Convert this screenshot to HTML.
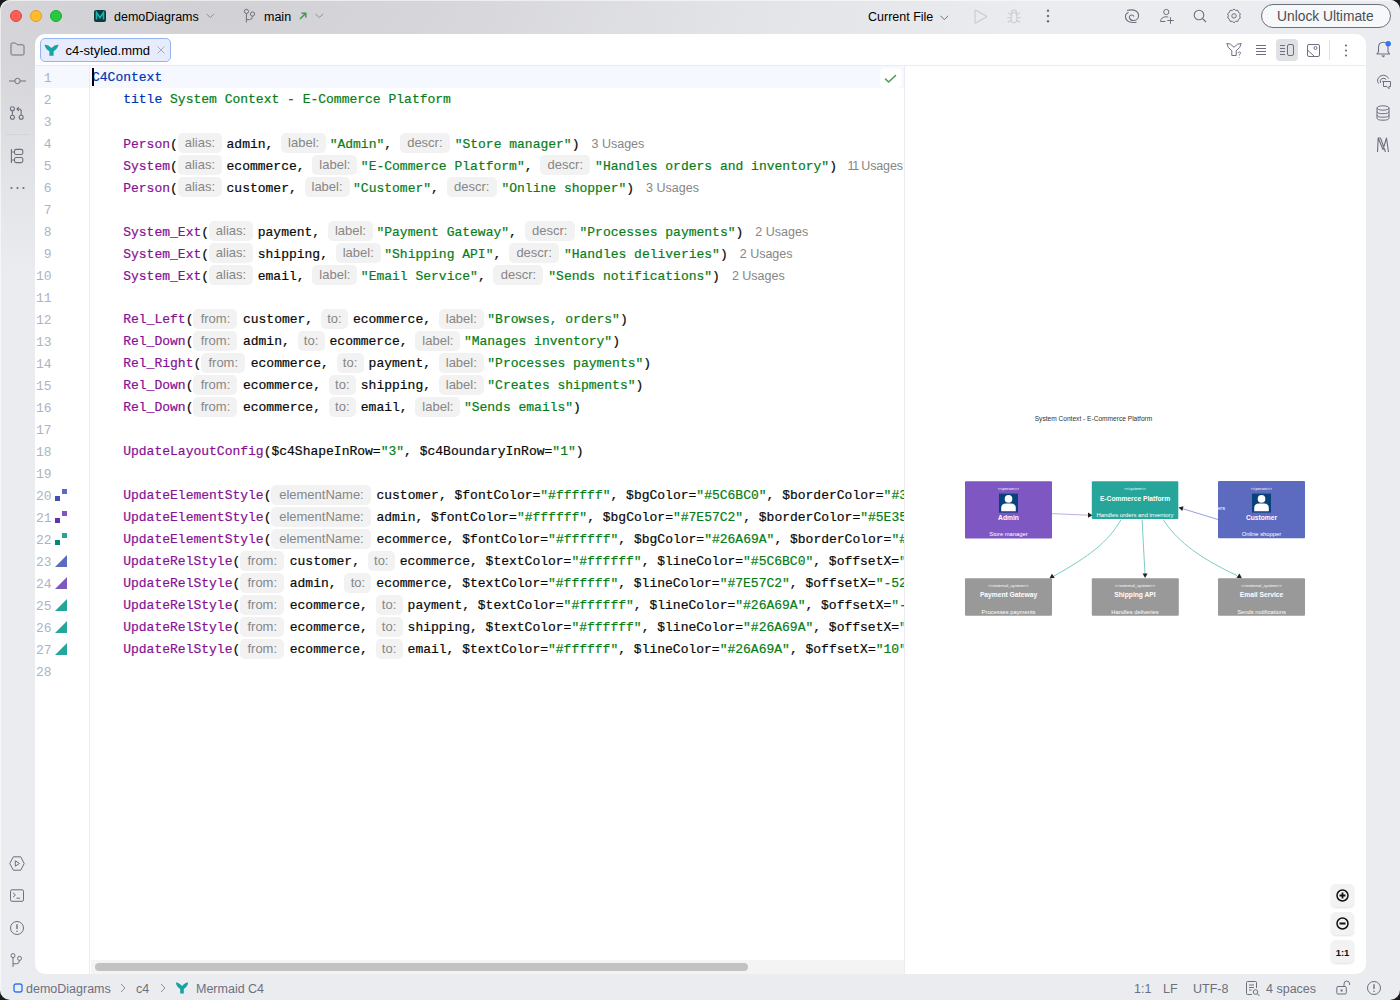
<!DOCTYPE html>
<html><head><meta charset="utf-8">
<style>
*{margin:0;padding:0;box-sizing:border-box}
html,body{width:1400px;height:1000px;overflow:hidden;background:#1b1b1d}
body{font-family:"Liberation Sans",sans-serif;position:relative}
.win{position:absolute;left:0;top:0;width:1400px;height:1000px;border-radius:10px;overflow:hidden;background:#EBECF0}
.tbgrad{position:absolute;left:0;top:0;width:1400px;height:300px;background:radial-gradient(ellipse 850px 280px at 180px 0px,#d1d1d5 0%,#d6d6da 30%,#e2e3e7 65%,#EBECF0 100%)}
.lgrad{position:absolute;left:0;top:0;width:1400px;height:1000px;border-radius:10px;box-shadow:inset 1px 1px 0 rgba(255,255,255,0.55)}
.abs{position:absolute}
svg.abs{overflow:visible}
.island{position:absolute;left:35px;top:34px;width:1331px;height:940px;background:#fff;border-radius:10px;overflow:hidden}
.tl{position:absolute;width:12px;height:12px;border-radius:50%;top:10px}
.tt{position:absolute;font-size:12.5px;color:#000;line-height:16px;white-space:nowrap}
/* editor (coords relative to island: subtract 35,34) */
.hdrsep{position:absolute;left:0;top:31px;width:1331px;height:1px;background:#EBECF0}
.curline{position:absolute;left:0;top:32px;width:869px;height:22px;background:#F5F8FE}
.gutsep{position:absolute;left:54px;top:32px;width:1px;height:908px;background:#EBECF0}
.split{position:absolute;left:869px;top:32px;width:1px;height:908px;background:#EBECF0}
.lnums{position:absolute;left:0;top:34px;width:16.5px;font-family:"Liberation Mono",monospace;font-size:13px;line-height:22px;color:#AEB3C2;text-align:right}
.code{position:absolute;left:57px;top:33px;width:812px;height:908px;overflow:hidden;font-family:"Liberation Mono",monospace;font-size:13px;line-height:22px;color:#080808;white-space:pre;-webkit-text-stroke:0.2px}
.ln{height:22px;position:relative}
.code b{font-weight:normal}
.k{color:#0033B3}.f{color:#871094}.s{color:#067D17}
.h{-webkit-text-stroke:0;display:inline-block;font-style:normal;font-family:"Liberation Sans",sans-serif;font-size:13px;color:#868686;background:#F2F2F2;border-radius:5px;height:20px;line-height:20px;vertical-align:top;margin-top:0px;text-align:center;white-space:nowrap}
.us{-webkit-text-stroke:0;text-decoration:none;font-family:"Liberation Sans",sans-serif;font-size:12.5px;color:#868686;margin-left:12px}
.tab{position:absolute;left:5px;top:4px;width:131px;height:24px;border-radius:5px;background:#E6ECFC;border:1px solid #92B3F4}
.sb{position:absolute;font-size:12.5px;color:#6C707E;top:981px;line-height:16px;white-space:nowrap}
.zbtn{position:absolute;left:1296px;width:23px;height:23px;border-radius:5px;background:#F2F2F2;box-shadow:0 1px 2px rgba(0,0,0,0.12)}
.dg{position:absolute;color:#fff;text-align:center;white-space:nowrap;font-family:"Liberation Sans",sans-serif}
</style></head><body>
<div class="win">
  <div class="tbgrad"></div>
  <div class="lgrad"></div>
  <div class="tl" style="left:10px;background:#ff5f57;border:0.5px solid #e2463f"></div>
  <div class="tl" style="left:30px;background:#febc2e;border:0.5px solid #e1a116"></div>
  <div class="tl" style="left:50px;background:#28c840;border:0.5px solid #14ae2b"></div>

  <!-- title bar -->
  <svg class="abs" style="left:94px;top:10px" width="12" height="12" viewBox="0 0 12 12"><rect x="0" y="0" width="12" height="12" rx="2" fill="#0c3a3e"/><path d="M2.5 9.5V2.5L6 7.5 9.5 2.5V9.5" fill="none" stroke="#1bb3b5" stroke-width="1.6"/></svg>
  <div class="tt" style="left:114px;top:9px">demoDiagrams</div>
  <svg class="abs" style="left:206px;top:13px" width="9" height="6" viewBox="0 0 9 6"><path d="M0.5 0.8L4.3 4.6 8.1 0.8" fill="none" stroke="#8C8F99" stroke-width="1"/></svg>
  <svg class="abs" style="left:243px;top:8px" width="14" height="16" viewBox="0 0 14 16"><circle cx="3.4" cy="3.4" r="2.1" fill="none" stroke="#6C707E" stroke-width="1"/><circle cx="9.5" cy="6" r="2.1" fill="none" stroke="#6C707E" stroke-width="1"/><path d="M3.4 5.5V14.5M3.4 11.6H6.5Q9.5 11.6 9.5 8.1" fill="none" stroke="#6C707E" stroke-width="1"/></svg>
  <div class="tt" style="left:264px;top:9px">main</div>
  <svg class="abs" style="left:299px;top:12px" width="8" height="8" viewBox="0 0 8 8"><path d="M1 7L6.8 1.2M2.5 1.2H6.8V5.5" fill="none" stroke="#3E9A4F" stroke-width="1.5"/></svg>
  <svg class="abs" style="left:315px;top:13px" width="9" height="6" viewBox="0 0 9 6"><path d="M0.5 0.8L4.3 4.6 8.1 0.8" fill="none" stroke="#8C8F99" stroke-width="1"/></svg>

  <div class="tt" style="left:868px;top:9px">Current File</div>
  <svg class="abs" style="left:940px;top:15px" width="9" height="6" viewBox="0 0 9 6"><path d="M0.5 0.8L4.3 4.6 8.1 0.8" fill="none" stroke="#6C707E" stroke-width="1"/></svg>
  <svg class="abs" style="left:973px;top:9px" width="15" height="15" viewBox="0 0 15 15"><path d="M2 1.8Q2 0.8 3 1.3L13.2 6.9Q14 7.5 13.2 8.1L3 13.7Q2 14.2 2 13.2Z" fill="none" stroke="#C9CBD1" stroke-width="1.1"/></svg>
  <svg class="abs" style="left:1006px;top:9px" width="16" height="15" viewBox="0 0 16 15"><path d="M5.3 4.2Q5.3 1 8 1 10.7 1 10.7 4.2M8 3.5Q11 3.5 11 9.2 11 13.8 8 13.8 5 13.8 5 9.2 5 3.5 8 3.5ZM5 5.5L1.8 3.6M11 5.5L14.2 3.6M5 8.8H1.2M11 8.8H14.8M5 11.5L1.8 13.2M11 11.5L14.2 13.2" fill="none" stroke="#C9CBD1" stroke-width="1.1"/></svg>
  <svg class="abs" style="left:1046px;top:9px" width="4" height="15" viewBox="0 0 4 15"><circle cx="2" cy="1.7" r="1.2" fill="#6C707E"/><circle cx="2" cy="7" r="1.2" fill="#6C707E"/><circle cx="2" cy="12.3" r="1.2" fill="#6C707E"/></svg>

  <svg class="abs" style="left:1124px;top:9px" width="16" height="15" viewBox="0 0 16 15"><path d="M3 1.6Q8 0 12 2 15 4 14.5 7.5 14 11 10 11.5 6.5 11.8 5.5 9 4.8 6.5 7.5 6 9.5 5.8 9.8 7.6M12.6 13.2Q8 14.2 4.5 12.5 1.2 10.5 1.5 7 1.8 4.3 4.5 3.5" fill="none" stroke="#6C707E" stroke-width="1.1"/></svg>
  <svg class="abs" style="left:1159px;top:8px" width="17" height="17" viewBox="0 0 17 17"><circle cx="7.3" cy="4" r="2.6" fill="none" stroke="#6C707E" stroke-width="1"/><path d="M1.5 13.5Q2 9 7 8.8 8.5 8.8 9.3 9.2M1.5 13.5H6.5M11.5 9.3V15.8M8.3 12.5H14.8" fill="none" stroke="#6C707E" stroke-width="1"/></svg>
  <svg class="abs" style="left:1193px;top:9px" width="14" height="14" viewBox="0 0 14 14"><circle cx="6" cy="6" r="4.8" fill="none" stroke="#6C707E" stroke-width="1.1"/><path d="M9.5 9.5L13 13" stroke="#6C707E" stroke-width="1.1"/></svg>
  <svg class="abs" style="left:1226px;top:8px" width="16" height="16" viewBox="0 0 16 16"><path d="M8 1L9.6 2.4 11.8 2.3 12.5 4.4 14.3 5.7 13.7 7.8 14.3 10 12.5 11.3 11.8 13.4 9.6 13.3 8 14.8 6.4 13.3 4.2 13.4 3.5 11.3 1.7 10 2.3 7.8 1.7 5.7 3.5 4.4 4.2 2.3 6.4 2.4Z" fill="none" stroke="#6C707E" stroke-width="1" stroke-linejoin="round"/><circle cx="8" cy="7.9" r="2.2" fill="none" stroke="#6C707E" stroke-width="1"/></svg>
  <div class="abs" style="left:1261px;top:4px;width:130px;height:24px;border-radius:12px;border:1.8px solid #6C707E;background:#F7F8FA"></div>
  <div class="tt" style="left:1277px;top:8px;font-size:13.8px;color:#4a4d55;line-height:18px">Unlock Ultimate</div>

  <!-- left strip -->
  <svg class="abs" style="left:10px;top:42px" width="15" height="14" viewBox="0 0 15 14"><path d="M1 2.2Q1 1 2.2 1H5.5L7.3 2.8H12.8Q14 2.8 14 4V11.8Q14 13 12.8 13H2.2Q1 13 1 11.8Z" fill="none" stroke="#6C707E" stroke-width="1"/></svg>
  <svg class="abs" style="left:9px;top:75px" width="17" height="12" viewBox="0 0 17 12"><circle cx="8.5" cy="6" r="2.7" fill="none" stroke="#6C707E" stroke-width="1"/><path d="M0 6H5.8M11.2 6H17" stroke="#6C707E" stroke-width="1"/></svg>
  <svg class="abs" style="left:8px;top:105px" width="16" height="16" viewBox="0 0 16 16"><circle cx="4.4" cy="3.8" r="2" fill="none" stroke="#6C707E" stroke-width="1.1"/><circle cx="4.4" cy="12.2" r="2" fill="none" stroke="#6C707E" stroke-width="1.1"/><circle cx="13.2" cy="12.2" r="2" fill="none" stroke="#6C707E" stroke-width="1.1"/><path d="M4.4 5.8V10.2M13.2 10.2V6.2Q13.2 4 11 4H9.3M10.8 2.2L9 4 10.8 5.8" fill="none" stroke="#6C707E" stroke-width="1.1"/></svg>
  <div class="abs" style="left:5px;top:134px;width:24px;height:1px;background:#D3D5DB"></div>
  <svg class="abs" style="left:10px;top:148px" width="14" height="16" viewBox="0 0 14 16"><path d="M1.4 1V15M1.4 4H4.5M1.4 12H4.5" fill="none" stroke="#6C707E" stroke-width="1.1"/><rect x="4.5" y="1.4" width="8.3" height="5.1" rx="1.6" fill="none" stroke="#6C707E" stroke-width="1.1"/><rect x="4.5" y="9.5" width="8.3" height="5.1" rx="1.6" fill="none" stroke="#6C707E" stroke-width="1.1"/></svg>
  <svg class="abs" style="left:10px;top:186px" width="15" height="4" viewBox="0 0 15 4"><circle cx="1.5" cy="2" r="1.1" fill="#6C707E"/><circle cx="7.5" cy="2" r="1.1" fill="#6C707E"/><circle cx="13.5" cy="2" r="1.1" fill="#6C707E"/></svg>

  <svg class="abs" style="left:9px;top:856px" width="16" height="15" viewBox="0 0 16 15"><path d="M4.3 0.8H11.7L15.2 7.5 11.7 14.2H4.3L0.8 7.5Z" fill="none" stroke="#6C707E" stroke-width="1"/><path d="M6.3 4.8V10.2L10.5 7.5Z" fill="none" stroke="#6C707E" stroke-width="1"/></svg>
  <svg class="abs" style="left:10px;top:889px" width="14" height="13" viewBox="0 0 14 13"><rect x="0.5" y="0.8" width="13" height="11.5" rx="1.5" fill="none" stroke="#6C707E" stroke-width="1"/><path d="M3 3.8L5.4 6 3 8.2M6.5 9.2H10" fill="none" stroke="#6C707E" stroke-width="1"/></svg>
  <svg class="abs" style="left:10px;top:921px" width="14" height="14" viewBox="0 0 14 14"><circle cx="7" cy="7" r="6.5" fill="none" stroke="#6C707E" stroke-width="1"/><path d="M7 3.3V8" stroke="#6C707E" stroke-width="1.4"/><circle cx="7" cy="10.2" r="0.8" fill="#6C707E"/></svg>
  <svg class="abs" style="left:10px;top:953px" width="13" height="15" viewBox="0 0 13 15"><circle cx="3" cy="2.6" r="2" fill="none" stroke="#6C707E" stroke-width="1"/><circle cx="9.5" cy="5.4" r="2" fill="none" stroke="#6C707E" stroke-width="1"/><path d="M3 4.6V14M3 10.8H6.5Q9.5 10.8 9.5 7.4" fill="none" stroke="#6C707E" stroke-width="1"/></svg>

  <!-- right strip -->
  <svg class="abs" style="left:1376px;top:41px" width="16" height="17" viewBox="0 0 16 17"><path d="M1 13H13.5L12 10.8V6.8Q12 1.2 7.2 1.2 2.5 1.2 2.5 6.8V10.8Z" fill="none" stroke="#6C707E" stroke-width="1.1" stroke-linejoin="round"/><path d="M5.8 14.8H8.8L7.3 16Z" fill="#6C707E" stroke="#6C707E" stroke-width="0.6"/><circle cx="12.2" cy="2.8" r="2.7" fill="#3574F0"/></svg>
  <svg class="abs" style="left:1376px;top:74px" width="16" height="16" viewBox="0 0 16 16"><path d="M2.5 9.5Q1 7.5 1.8 5 3.3 1.2 7.5 1.2 11 1.3 12.8 4.5M4.5 9Q3.5 6.5 5.5 4.8 8 3.2 10.3 5.5M7.8 7.5Q6.5 6.8 6 8" fill="none" stroke="#6C707E" stroke-width="1"/><path d="M7.5 7.5H14.5V12.5H13V14.8L11 12.5H7.5Z" fill="#EBECF0" stroke="#6C707E" stroke-width="1" stroke-linejoin="round"/></svg>
  <svg class="abs" style="left:1376px;top:105px" width="14" height="16" viewBox="0 0 14 16"><ellipse cx="7" cy="3" rx="6" ry="2.2" fill="none" stroke="#6C707E" stroke-width="1"/><path d="M1 3V13Q1 15.2 7 15.2 13 15.2 13 13V3M1 6.5Q1 8.7 7 8.7 13 8.7 13 6.5M1 10Q1 12.2 7 12.2 13 12.2 13 10" fill="none" stroke="#6C707E" stroke-width="1"/></svg>
  <svg class="abs" style="left:1376px;top:137px" width="14" height="16" viewBox="0 0 14 16"><path d="M1.5 15L2.2 1 7 12.5 10.5 1 12.5 15M4.5 1L9.5 15M2.2 1H4.5" fill="none" stroke="#6C707E" stroke-width="1.1" stroke-linejoin="round"/></svg>

  <!-- status bar -->
  <svg class="abs" style="left:13px;top:983px" width="10" height="10" viewBox="0 0 10 10"><rect x="1" y="1" width="8" height="8" rx="2" fill="#E6EEFD" stroke="#3574F0" stroke-width="1.4"/></svg>
  <div class="sb" style="left:26px">demoDiagrams</div>
  <svg class="abs" style="left:120px;top:983px" width="6" height="10" viewBox="0 0 6 10"><path d="M1 1L5 5 1 9" fill="none" stroke="#8C8F99" stroke-width="1"/></svg>
  <div class="sb" style="left:136px">c4</div>
  <svg class="abs" style="left:160px;top:983px" width="6" height="10" viewBox="0 0 6 10"><path d="M1 1L5 5 1 9" fill="none" stroke="#8C8F99" stroke-width="1"/></svg>
  <svg class="abs" style="left:175px;top:981px" width="14" height="13" viewBox="0 0 14 13"><path d="M0.8 1.5Q3.5 1 7 5 10.5 1 13.2 1.5 12.5 5.5 8.8 8V12.5H5.2V8Q1.5 5.5 0.8 1.5Z" fill="#17A2A4"/></svg>
  <div class="sb" style="left:196px">Mermaid C4</div>
  <div class="sb" style="left:1134px">1:1</div>
  <div class="sb" style="left:1163px">LF</div>
  <div class="sb" style="left:1193px">UTF-8</div>
  <svg class="abs" style="left:1245px;top:981px" width="16" height="16" viewBox="0 0 16 16"><path d="M7 13.5H2.5Q1.5 13.5 1.5 12.5V1.5Q1.5 0.5 2.5 0.5H10.5Q11.5 0.5 11.5 1.5V7" fill="none" stroke="#6C707E" stroke-width="1"/><path d="M4 4H9M4 6.5H9M4 9H6.5" stroke="#6C707E" stroke-width="1"/><circle cx="10.5" cy="11" r="2.3" fill="none" stroke="#6C707E" stroke-width="1"/><path d="M12.2 12.7L14.5 15" stroke="#6C707E" stroke-width="1"/></svg>
  <div class="sb" style="left:1266px">4 spaces</div>
  <svg class="abs" style="left:1336px;top:980px" width="15" height="15" viewBox="0 0 15 15"><rect x="0.8" y="6.5" width="9.5" height="7.5" rx="1.2" fill="none" stroke="#6C707E" stroke-width="1"/><path d="M8 6.5V4Q8 1 10.8 1 13.6 1 13.6 4V5" fill="none" stroke="#6C707E" stroke-width="1"/><rect x="4.6" y="9.5" width="2" height="2" fill="#6C707E"/></svg>
  <svg class="abs" style="left:1367px;top:981px" width="14" height="14" viewBox="0 0 14 14"><circle cx="7" cy="7" r="6.5" fill="none" stroke="#6C707E" stroke-width="1"/><path d="M7 3.3V8" stroke="#6C707E" stroke-width="1.4"/><circle cx="7" cy="10.2" r="0.8" fill="#6C707E"/></svg>

  <div class="island">
    <div class="hdrsep"></div>
    <div class="tab"></div>
    <svg class="abs" style="left:9px;top:10px" width="15" height="12" viewBox="0 0 15 12"><path d="M0.5 0.8Q4 0.3 7.5 4 11 0.3 14.5 0.8 13.6 5 9.6 7.3V11.8H5.4V7.3Q1.4 5 0.5 0.8Z" fill="#17A2A4"/></svg>
    <div class="tt" style="left:30.5px;top:9px;font-size:13px;color:#000">c4-styled.mmd</div>
    <svg class="abs" style="left:122px;top:12px" width="8" height="8" viewBox="0 0 8 8"><path d="M0.5 0.5L7.5 7.5M7.5 0.5L0.5 7.5" stroke="#A8ADBD" stroke-width="1"/></svg>

    <!-- editor toolbar right -->
    <svg class="abs" style="left:1191px;top:8px" width="18" height="16" viewBox="0 0 18 16"><path d="M0.8 1.5Q4.5 0.8 8 5.3 11.5 0.8 15.2 1.5 14.5 6.2 10.2 8.6V13.5H5.8V8.6Q1.5 6.2 0.8 1.5Z" fill="none" stroke="#6C707E" stroke-width="1"/><path d="M12 11.2Q12 10 13.3 10 14.6 10 14.6 11.2 14.6 12 13.3 12.6V13.5M13.3 15V15.6" fill="none" stroke="#6C707E" stroke-width="0.9"/></svg>
    <svg class="abs" style="left:1221px;top:10px" width="11" height="11" viewBox="0 0 11 11"><path d="M0 1.5H10M0 4.5H10M0 7.5H10M0 10.5H10" stroke="#6C707E" stroke-width="1"/></svg>
    <div class="abs" style="left:1241px;top:5px;width:22px;height:22px;border-radius:4px;background:#DFE1E5"></div>
    <svg class="abs" style="left:1245px;top:10px" width="14" height="13" viewBox="0 0 14 13"><path d="M0 1.5H5M0 4.5H5M0 7.5H5M0 10.5H5" stroke="#6C707E" stroke-width="1"/><rect x="7.5" y="0.5" width="6" height="11" rx="1.5" fill="none" stroke="#6C707E" stroke-width="1"/></svg>
    <svg class="abs" style="left:1272px;top:10px" width="13" height="13" viewBox="0 0 13 13"><rect x="0.5" y="0.5" width="12" height="12" rx="1.5" fill="none" stroke="#6C707E" stroke-width="1"/><circle cx="8.5" cy="4" r="1.5" fill="none" stroke="#6C707E" stroke-width="1"/><path d="M0.5 6L7.5 12.5" stroke="#6C707E" stroke-width="1"/></svg>
    <div class="abs" style="left:1294px;top:6px;width:1px;height:20px;background:#DFE1E5"></div>
    <svg class="abs" style="left:1309px;top:10px" width="4" height="13" viewBox="0 0 4 13"><circle cx="2" cy="1.5" r="1.1" fill="#6C707E"/><circle cx="2" cy="6.5" r="1.1" fill="#6C707E"/><circle cx="2" cy="11.5" r="1.1" fill="#6C707E"/></svg>

    <div class="curline"></div>
    <div class="gutsep"></div>
    <div class="split"></div>
    <div class="lnums">1<br>2<br>3<br>4<br>5<br>6<br>7<br>8<br>9<br>10<br>11<br>12<br>13<br>14<br>15<br>16<br>17<br>18<br>19<br>20<br>21<br>22<br>23<br>24<br>25<br>26<br>27<br>28</div>
    <div class="code"><div class="ln"><b class="k">C4Context</b></div><div class="ln">    <b class="k">title</b><b class="s"> System Context - E-Commerce Platform</b></div><div class="ln"></div><div class="ln">    <b class="f">Person</b>(<i class="h" style="width:44px;margin-right:4.7px">alias:</i>admin, <i class="h" style="width:45px;margin-right:3.5px">label:</i><b class="s">&quot;Admin&quot;</b>, <i class="h" style="width:50px;margin-right:4.8px">descr:</i><b class="s">&quot;Store manager&quot;</b>)<u class="us">3 Usages</u></div><div class="ln">    <b class="f">System</b>(<i class="h" style="width:44px;margin-right:4.7px">alias:</i>ecommerce, <i class="h" style="width:45px;margin-right:3.5px">label:</i><b class="s">&quot;E-Commerce Platform&quot;</b>, <i class="h" style="width:50px;margin-right:4.8px">descr:</i><b class="s">&quot;Handles orders and inventory&quot;</b>)<u class="us"><span style="letter-spacing:-1.3px;margin-left:-1.5px">11</span> <span style="letter-spacing:-0.15px">Usages</span></u></div><div class="ln">    <b class="f">Person</b>(<i class="h" style="width:44px;margin-right:4.7px">alias:</i>customer, <i class="h" style="width:45px;margin-right:3.5px">label:</i><b class="s">&quot;Customer&quot;</b>, <i class="h" style="width:50px;margin-right:4.8px">descr:</i><b class="s">&quot;Online shopper&quot;</b>)<u class="us">3 Usages</u></div><div class="ln"></div><div class="ln">    <b class="f">System_Ext</b>(<i class="h" style="width:44px;margin-right:4.7px">alias:</i>payment, <i class="h" style="width:45px;margin-right:3.5px">label:</i><b class="s">&quot;Payment Gateway&quot;</b>, <i class="h" style="width:50px;margin-right:4.8px">descr:</i><b class="s">&quot;Processes payments&quot;</b>)<u class="us">2 Usages</u></div><div class="ln">    <b class="f">System_Ext</b>(<i class="h" style="width:44px;margin-right:4.7px">alias:</i>shipping, <i class="h" style="width:45px;margin-right:3.5px">label:</i><b class="s">&quot;Shipping API&quot;</b>, <i class="h" style="width:50px;margin-right:4.8px">descr:</i><b class="s">&quot;Handles deliveries&quot;</b>)<u class="us">2 Usages</u></div><div class="ln">    <b class="f">System_Ext</b>(<i class="h" style="width:44px;margin-right:4.7px">alias:</i>email, <i class="h" style="width:45px;margin-right:3.5px">label:</i><b class="s">&quot;Email Service&quot;</b>, <i class="h" style="width:50px;margin-right:4.8px">descr:</i><b class="s">&quot;Sends notifications&quot;</b>)<u class="us">2 Usages</u></div><div class="ln"></div><div class="ln">    <b class="f">Rel_Left</b>(<i class="h" style="width:44px;margin-right:5.5px">from:</i>customer, <i class="h" style="width:27px;margin-right:5px">to:</i>ecommerce, <i class="h" style="width:45px;margin-right:3.5px">label:</i><b class="s">&quot;Browses, orders&quot;</b>)</div><div class="ln">    <b class="f">Rel_Down</b>(<i class="h" style="width:44px;margin-right:5.5px">from:</i>admin, <i class="h" style="width:27px;margin-right:5px">to:</i>ecommerce, <i class="h" style="width:45px;margin-right:3.5px">label:</i><b class="s">&quot;Manages inventory&quot;</b>)</div><div class="ln">    <b class="f">Rel_Right</b>(<i class="h" style="width:44px;margin-right:5.5px">from:</i>ecommerce, <i class="h" style="width:27px;margin-right:5px">to:</i>payment, <i class="h" style="width:45px;margin-right:3.5px">label:</i><b class="s">&quot;Processes payments&quot;</b>)</div><div class="ln">    <b class="f">Rel_Down</b>(<i class="h" style="width:44px;margin-right:5.5px">from:</i>ecommerce, <i class="h" style="width:27px;margin-right:5px">to:</i>shipping, <i class="h" style="width:45px;margin-right:3.5px">label:</i><b class="s">&quot;Creates shipments&quot;</b>)</div><div class="ln">    <b class="f">Rel_Down</b>(<i class="h" style="width:44px;margin-right:5.5px">from:</i>ecommerce, <i class="h" style="width:27px;margin-right:5px">to:</i>email, <i class="h" style="width:45px;margin-right:3.5px">label:</i><b class="s">&quot;Sends emails&quot;</b>)</div><div class="ln"></div><div class="ln">    <b class="f">UpdateLayoutConfig</b>($c4ShapeInRow=<b class="s">&quot;3&quot;</b>, $c4BoundaryInRow=<b class="s">&quot;1&quot;</b>)</div><div class="ln"></div><div class="ln">    <b class="f">UpdateElementStyle</b>(<i class="h" style="width:100px;margin-right:5px">elementName:</i>customer, $fontColor=<b class="s">&quot;#ffffff&quot;</b>, $bgColor=<b class="s">&quot;#5C6BC0&quot;</b>, $borderColor=<b class="s">&quot;#3F51B5&quot;</b>)</div><div class="ln">    <b class="f">UpdateElementStyle</b>(<i class="h" style="width:100px;margin-right:5px">elementName:</i>admin, $fontColor=<b class="s">&quot;#ffffff&quot;</b>, $bgColor=<b class="s">&quot;#7E57C2&quot;</b>, $borderColor=<b class="s">&quot;#5E35B1&quot;</b>)</div><div class="ln">    <b class="f">UpdateElementStyle</b>(<i class="h" style="width:100px;margin-right:5px">elementName:</i>ecommerce, $fontColor=<b class="s">&quot;#ffffff&quot;</b>, $bgColor=<b class="s">&quot;#26A69A&quot;</b>, $borderColor=<b class="s">&quot;#00897B&quot;</b>)</div><div class="ln">    <b class="f">UpdateRelStyle</b>(<i class="h" style="width:44px;margin-right:5.5px">from:</i>customer, <i class="h" style="width:27px;margin-right:5px">to:</i>ecommerce, $textColor=<b class="s">&quot;#ffffff&quot;</b>, $lineColor=<b class="s">&quot;#5C6BC0&quot;</b>, $offsetX=<b class="s">&quot;-40&quot;</b>)</div><div class="ln">    <b class="f">UpdateRelStyle</b>(<i class="h" style="width:44px;margin-right:5.5px">from:</i>admin, <i class="h" style="width:27px;margin-right:5px">to:</i>ecommerce, $textColor=<b class="s">&quot;#ffffff&quot;</b>, $lineColor=<b class="s">&quot;#7E57C2&quot;</b>, $offsetX=<b class="s">&quot;-52&quot;</b>)</div><div class="ln">    <b class="f">UpdateRelStyle</b>(<i class="h" style="width:44px;margin-right:5.5px">from:</i>ecommerce, <i class="h" style="width:27px;margin-right:5px">to:</i>payment, $textColor=<b class="s">&quot;#ffffff&quot;</b>, $lineColor=<b class="s">&quot;#26A69A&quot;</b>, $offsetX=<b class="s">&quot;-60&quot;</b>)</div><div class="ln">    <b class="f">UpdateRelStyle</b>(<i class="h" style="width:44px;margin-right:5.5px">from:</i>ecommerce, <i class="h" style="width:27px;margin-right:5px">to:</i>shipping, $textColor=<b class="s">&quot;#ffffff&quot;</b>, $lineColor=<b class="s">&quot;#26A69A&quot;</b>, $offsetX=<b class="s">&quot;10&quot;</b>)</div><div class="ln">    <b class="f">UpdateRelStyle</b>(<i class="h" style="width:44px;margin-right:5.5px">from:</i>ecommerce, <i class="h" style="width:27px;margin-right:5px">to:</i>email, $textColor=<b class="s">&quot;#ffffff&quot;</b>, $lineColor=<b class="s">&quot;#26A69A&quot;</b>, $offsetX=<b class="s">&quot;10&quot;</b>)</div><div class="ln"></div></div>
    <div class="abs" style="left:57px;top:34px;width:2px;height:18px;background:#000"></div>
    <!-- check mark -->
    <div class="abs" style="left:845px;top:34px;width:22px;height:20px;border-radius:5px;background:#fff"></div>
    <svg class="abs" style="left:849px;top:40px" width="13" height="10" viewBox="0 0 13 10"><path d="M1.5 5L4.6 8 11.5 1.5" fill="none" stroke="#4A9C5D" stroke-width="1.6" stroke-linecap="round" stroke-linejoin="round"/></svg>
    <!-- gutter color icons -->
    <div class="abs" style="left:20px;top:462px;width:5px;height:5px;background:#3F51B5"></div>
    <div class="abs" style="left:27px;top:455px;width:5px;height:5px;background:#5C6BC0"></div>
    <div class="abs" style="left:20px;top:484px;width:5px;height:5px;background:#5E35B1"></div>
    <div class="abs" style="left:27px;top:477px;width:5px;height:5px;background:#7E57C2"></div>
    <div class="abs" style="left:20px;top:506px;width:5px;height:5px;background:#00897B"></div>
    <div class="abs" style="left:27px;top:499px;width:5px;height:5px;background:#26A69A"></div>
    <svg class="abs" style="left:20px;top:521px" width="12" height="12" viewBox="0 0 12 12"><path d="M0 12L12 0V12Z" fill="#5C6BC0"/></svg>
    <svg class="abs" style="left:20px;top:543px" width="12" height="12" viewBox="0 0 12 12"><path d="M0 12L12 0V12Z" fill="#7E57C2"/></svg>
    <svg class="abs" style="left:20px;top:565px" width="12" height="12" viewBox="0 0 12 12"><path d="M0 12L12 0V12Z" fill="#26A69A"/></svg>
    <svg class="abs" style="left:20px;top:587px" width="12" height="12" viewBox="0 0 12 12"><path d="M0 12L12 0V12Z" fill="#26A69A"/></svg>
    <svg class="abs" style="left:20px;top:609px" width="12" height="12" viewBox="0 0 12 12"><path d="M0 12L12 0V12Z" fill="#26A69A"/></svg>

    <!-- horizontal scrollbar -->
    <div class="abs" style="left:56px;top:926px;width:813px;height:14px;background:#F4F4F4"></div>
    <div class="abs" style="left:60px;top:929px;width:653px;height:8px;border-radius:4px;background:#C2C2C2"></div>

    <!-- preview zoom buttons -->
    <div class="zbtn" style="top:850px"></div>
    <div class="zbtn" style="top:878px"></div>
    <div class="zbtn" style="top:906px"></div>
    <svg class="abs" style="left:1301px;top:855px" width="13" height="13" viewBox="0 0 13 13"><circle cx="6.5" cy="6.5" r="5.5" fill="none" stroke="#111" stroke-width="1.5"/><path d="M6.5 3.5V9.5M3.5 6.5H9.5" stroke="#111" stroke-width="1.8"/></svg>
    <svg class="abs" style="left:1301px;top:883px" width="13" height="13" viewBox="0 0 13 13"><circle cx="6.5" cy="6.5" r="5.5" fill="none" stroke="#111" stroke-width="1.5"/><path d="M3.5 6.5H9.5" stroke="#111" stroke-width="1.8"/></svg>
    <div class="abs" style="left:1296px;top:913px;width:23px;text-align:center;font-size:9.5px;font-weight:bold;color:#111;line-height:12px">1:1</div>

  </div>
  <svg class="abs" style="left:0;top:0" width="1400" height="1000" viewBox="0 0 1400 1000" font-family="Liberation Sans, sans-serif"><text x="1093.5" y="418" font-size="6.6" fill="#333" text-anchor="middle" dominant-baseline="central">System Context - E-Commerce Platform</text><path d="M1052 513.6L1088 515.2" stroke="#B9A3E0" stroke-width="0.9" fill="none"/><path d="M1088 512.6L1092.5 515.3 1088 517.8Z" fill="#222"/><path d="M1218 519.5L1183 508.8" stroke="#8A95D6" stroke-width="0.9" fill="none"/><path d="M1178.5 507.5L1183.5 506.3 1182.3 511Z" fill="#222"/><path d="M1121 519.7C1108 542 1090 556 1053 576.5" stroke="#6CC5BD" stroke-width="0.9" fill="none"/><path d="M1049.5 578.5L1051.8 573.8 1054.8 577.8Z" fill="#222"/><path d="M1142.2 519.7C1143 540 1144 555 1145 574" stroke="#6CC5BD" stroke-width="0.9" fill="none"/><path d="M1142.6 573.5H1147.6L1145.1 578Z" fill="#222"/><path d="M1163.4 519.7C1175 538 1195 556 1237 575.5" stroke="#6CC5BD" stroke-width="0.9" fill="none"/><path d="M1236.5 577.8L1239.5 573.5 1242 578.5Z" fill="#222"/><rect x="965" y="481.2" width="87" height="57.3" rx="1" fill="#7E57C2"/><rect x="1091.8" y="481.3" width="86.5" height="37.7" rx="1" fill="#26A69A"/><rect x="1218" y="481.1" width="87" height="57.2" rx="1" fill="#5C6BC0"/><rect x="965" y="578.3" width="87" height="37.5" rx="1" fill="#999999"/><rect x="1091.8" y="578.3" width="87" height="37.5" rx="1" fill="#999999"/><rect x="1218" y="578.3" width="87" height="37.5" rx="1" fill="#999999"/><text x="1008.5" y="488" font-size="3.9" fill="#fff" text-anchor="middle" dominant-baseline="central">&lt;&lt;person&gt;&gt;</text><rect x="999.0" y="493.6" width="19" height="19" fill="#08427B"/><circle cx="1008.5" cy="498.90000000000003" r="3.8" fill="#fff"/><path d="M1001.2 511.20000000000005V508.1Q1001.2 503.6 1006.0 503.6H1011.0Q1015.8 503.6 1015.8 508.1V511.20000000000005Z" fill="#fff"/><text x="1008.5" y="517" font-size="6.7" fill="#fff" text-anchor="middle" dominant-baseline="central" font-weight="bold">Admin</text><text x="1008.5" y="534" font-size="5.8" fill="#fff" text-anchor="middle" dominant-baseline="central">Store manager</text><text x="1261.5" y="488" font-size="3.9" fill="#fff" text-anchor="middle" dominant-baseline="central">&lt;&lt;person&gt;&gt;</text><rect x="1252.0" y="493.6" width="19" height="19" fill="#08427B"/><circle cx="1261.5" cy="498.90000000000003" r="3.8" fill="#fff"/><path d="M1254.2 511.20000000000005V508.1Q1254.2 503.6 1259.0 503.6H1264.0Q1268.8 503.6 1268.8 508.1V511.20000000000005Z" fill="#fff"/><text x="1261.5" y="517" font-size="6.7" fill="#fff" text-anchor="middle" dominant-baseline="central" font-weight="bold">Customer</text><text x="1261.5" y="534" font-size="5.8" fill="#fff" text-anchor="middle" dominant-baseline="central">Online shopper</text><text x="1135" y="488.2" font-size="3.9" fill="#fff" text-anchor="middle" dominant-baseline="central">&lt;&lt;system&gt;&gt;</text><text x="1135" y="498.4" font-size="6.7" fill="#fff" text-anchor="middle" dominant-baseline="central" font-weight="bold">E-Commerce Platform</text><text x="1135" y="514.5" font-size="5.9" fill="#fff" text-anchor="middle" dominant-baseline="central">Handles orders and inventory</text><text x="1008.5" y="585" font-size="4.2" fill="#fff" text-anchor="middle" dominant-baseline="central">&lt;&lt;external_system&gt;&gt;</text><text x="1008.5" y="594.8" font-size="6.7" fill="#fff" text-anchor="middle" dominant-baseline="central" font-weight="bold">Payment Gateway</text><text x="1008.5" y="611.5" font-size="5.8" fill="#fff" text-anchor="middle" dominant-baseline="central">Processes payments</text><text x="1135" y="585" font-size="4.2" fill="#fff" text-anchor="middle" dominant-baseline="central">&lt;&lt;external_system&gt;&gt;</text><text x="1135" y="594.8" font-size="6.7" fill="#fff" text-anchor="middle" dominant-baseline="central" font-weight="bold">Shipping API</text><text x="1135" y="611.5" font-size="5.8" fill="#fff" text-anchor="middle" dominant-baseline="central">Handles deliveries</text><text x="1261.5" y="585" font-size="4.2" fill="#fff" text-anchor="middle" dominant-baseline="central">&lt;&lt;external_system&gt;&gt;</text><text x="1261.5" y="594.8" font-size="6.7" fill="#fff" text-anchor="middle" dominant-baseline="central" font-weight="bold">Email Service</text><text x="1261.5" y="611.5" font-size="5.8" fill="#fff" text-anchor="middle" dominant-baseline="central">Sends notifications</text><text x="1217" y="508" font-size="5.8" fill="#fff" dominant-baseline="central">ers</text></svg>
</div>
</body></html>
